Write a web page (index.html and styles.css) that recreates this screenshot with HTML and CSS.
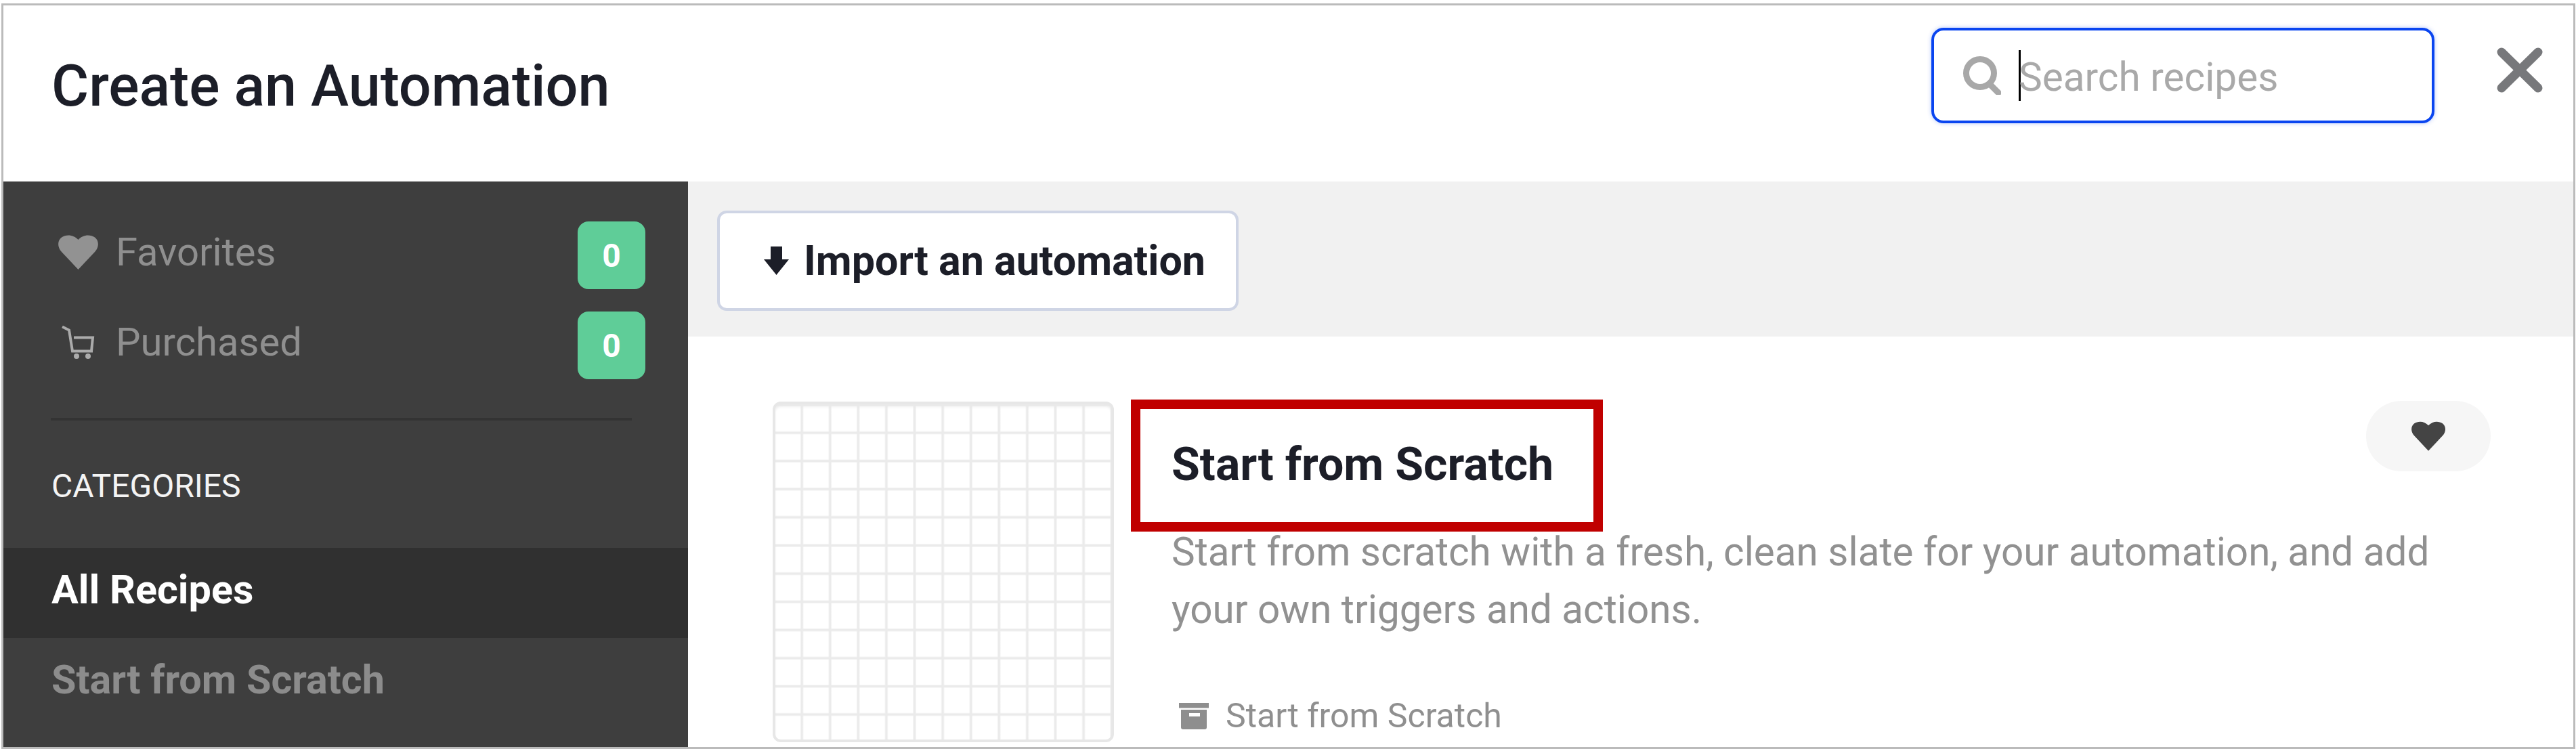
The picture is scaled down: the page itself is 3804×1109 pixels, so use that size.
FILE: index.html
```html
<!DOCTYPE html>
<html lang="en">
<head>
    <meta charset="UTF-8">
    <title>Create an Automation</title>
    <link rel="stylesheet" href="styles.css">
</head>
<body>
    <div class="frame">
        <header class="top-bar">
            <h1 class="top-title">Create an Automation</h1>
            <div class="search-box">
                <svg class="search-icon" viewBox="0 0 56 57" fill="none" stroke="#a8a8a8" stroke-width="9" stroke-linecap="round">
                    <circle cx="25" cy="25" r="20.500"/>
                    <path d="M39 41l13 13"/>
                </svg>
                <span class="caret"></span>
                <span class="search-text">Search recipes</span>
            </div>
            <svg class="close-icon" viewBox="0 0 68 67" fill="none" stroke="#77787b" stroke-width="13" stroke-linecap="round">
                <path d="M7 7l54 53M61 7L7 60"/>
            </svg>
        </header>
        <div class="body-row">
            <aside class="sidebar">
                <div class="side-top">
                    <div class="side-link">
                        <svg class="side-icon" viewBox="0 0 60 51" fill="#929292">
                            <path d="M29.5 51L5 25C-2 17-1 8 5 3.5 12-1.5 23-.5 29.5 7 36-.5 47-1.5 54 3.5 60 8 61 17 54 25z"/>
                        </svg>
                        <span class="side-link-text">Favorites</span>
                        <span class="badge">0</span>
                    </div>
                    <div class="side-link">
                        <svg class="side-icon" viewBox="0 0 60 51" fill="none" stroke="#ababab" stroke-width="4">
                            <path d="M6 2.5l10 5 5 31h30"/>
                            <path d="M23 18.500h28l-2 20"/>
                            <circle cx="27" cy="46" r="4" fill="#ababab" stroke="none"/>
                            <circle cx="44" cy="46" r="4" fill="#ababab" stroke="none"/>
                        </svg>
                        <span class="side-link-text">Purchased</span>
                        <span class="badge">0</span>
                    </div>
                </div>
                <div class="side-divider"></div>
                <div class="side-heading">CATEGORIES</div>
                <div class="side-item active"><span>All Recipes</span></div>
                <div class="side-item"><span>Start from Scratch</span></div>
            </aside>
            <main class="content">
                <div class="toolbar">
                    <button class="import-btn">
                        <svg class="import-icon" viewBox="0 0 37 42" fill="#1c1e28">
                            <path d="M10 0h17v19h10L18.500 42 0 19h10z"/>
                        </svg>
                        Import an automation
                    </button>
                </div>
                <div class="recipe">
                    <div class="thumb"></div>
                    <div class="recipe-info">
                        <div class="recipe-head">
                            <h2 class="recipe-title">Start from Scratch<span class="annotation"></span></h2>
                            <div class="fav-btn">
                                <svg class="fav-icon" viewBox="0 0 60 51" fill="#444">
                                    <path d="M29.5 51L5 25C-2 17-1 8 5 3.5 12-1.5 23-.5 29.5 7 36-.5 47-1.5 54 3.5 60 8 61 17 54 25z"/>
                                </svg>
                            </div>
                        </div>
                        <p class="recipe-desc">Start from scratch with a fresh, clean slate for your automation, and add your own triggers and actions.</p>
                        <div class="recipe-meta">
                            <svg class="meta-icon" viewBox="0 0 44 39" fill="#8e8e8e">
                                <rect width="44" height="7.500"/>
                                <path fill-rule="evenodd" d="M3 10h38v26a3 3 0 0 1-3 3H6a3 3 0 0 1-3-3zM15 15v5h16v-5z"/>
                            </svg>
                            Start from Scratch
                        </div>
                    </div>
                </div>
            </main>
        </div>
    </div>
</body>
</html>
```
FILE: styles.css
```css
html, body {
    margin: 0;
    height: 100%;
    background: #fff;
    overflow: hidden;
}
body {
    padding: 5px 1px 3px 2px;
    box-sizing: border-box;
    font-family: "Roboto", "Liberation Sans", sans-serif;
}
.frame {
    box-sizing: border-box;
    height: 100%;
    border: 3px solid #bbb;
    display: flex;
    flex-direction: column;
    overflow: hidden;
}

/* header */
.top-bar {
    flex: 0 0 260px;
    display: flex;
    align-items: flex-start;
    padding-left: 71px;
}
.top-title {
    margin: 70px auto 0 0;
    font-size: 84.5px;
    line-height: 100px;
    font-weight: 500;
    color: #1c1e28;
}
.search-box {
    box-sizing: border-box;
    width: 743px;
    height: 141px;
    margin-top: 33px;
    border: 4px solid #0a45f0;
    border-radius: 18px;
    box-shadow: 0 0 6px rgba(10, 69, 240, 0.3);
    display: flex;
    align-items: center;
    padding-left: 43px;
}
.search-icon {
    width: 56px;
    height: 57px;
}
.caret {
    width: 3px;
    height: 75px;
    background: #000;
    margin-left: 26px;
}
.search-text {
    font-size: 58.5px;
    color: #a9a9a9;
    margin: 4px 0 0 -3px;
}
.close-icon {
    width: 68px;
    height: 67px;
    margin: 62px 45px 0 92px;
}

/* sidebar */
.body-row {
    flex: 1;
    display: flex;
    min-height: 0;
}
.sidebar {
    flex: 0 0 1011px;
    background: #3e3e3e;
    padding-top: 59px;
    box-sizing: border-box;
}
.side-top {
    display: flex;
    flex-direction: column;
    gap: 33px;
    padding: 0 63px 0 81px;
}
.side-link {
    display: flex;
    align-items: center;
    height: 100px;
}
.side-icon {
    width: 60px;
    height: 51px;
    margin: 0 25px 10px 0;
}
.side-link-text {
    font-size: 58px;
    color: #8f8f8f;
    margin: 0 auto 10px 0;
}
.badge {
    width: 100px;
    height: 100px;
    border-radius: 16px;
    background: #5fcd98;
    color: #fff;
    font-size: 48px;
    font-weight: 700;
    display: flex;
    align-items: center;
    justify-content: center;
}
.side-divider {
    height: 4px;
    background: #333;
    margin: 57px 83px 0 70px;
}
.side-heading {
    margin: 73px 0 67px 71px;
    font-size: 48px;
    line-height: 48px;
    color: #f4f4f4;
}
.side-item {
    height: 133px;
    display: flex;
    align-items: center;
    padding-left: 71px;
    font-size: 59.3px;
    font-weight: 700;
    color: #8c8c8c;
}
.side-item span {
    margin-bottom: 10px;
}
.side-item.active {
    background: #303030;
    color: #fff;
}

/* main area */
.content {
    flex: 1;
    min-width: 0;
}
.toolbar {
    height: 229px;
    box-sizing: border-box;
    padding: 43px 0 0 43px;
    background: #f1f1f1;
}
.import-btn {
    box-sizing: border-box;
    width: 770px;
    height: 148px;
    background: #fff;
    border: 4px solid #cfd5e5;
    border-radius: 14px;
    display: flex;
    align-items: center;
    padding: 0 0 0 65px;
    font-family: inherit;
    font-size: 61px;
    font-weight: 700;
    color: #1c1e28;
}
.import-icon {
    width: 37px;
    height: 42px;
    margin-right: 22px;
}
.recipe {
    display: flex;
    padding: 96px 122px 0 125px;
}
.thumb {
    flex: 0 0 504px;
    height: 503px;
    box-sizing: border-box;
    border: 4px solid #e7e7e7;
    border-radius: 12px;
    box-shadow: inset 0 5px 4px -2px #e8e8e8;
    background-image:
        linear-gradient(to right, transparent 36.5px, #ebebeb 38px, #ebebeb 40.5px, transparent 41.600px),
        linear-gradient(to bottom, transparent 36.5px, #ebebeb 38px, #ebebeb 40.5px, transparent 41.600px);
    background-size: 41.6px 41.6px;
    background-position: 0 3px;
}
.recipe-info {
    flex: 1;
    margin-left: 85px;
}
.recipe-head {
    display: flex;
    justify-content: space-between;
    align-items: flex-start;
    margin-top: -1px;
}
.recipe-title {
    position: relative;
    margin: 54px 0 0;
    font-size: 68px;
    line-height: 80px;
    font-weight: 700;
    color: #1c1e28;
}
.annotation {
    position: absolute;
    left: -60px;
    top: -56px;
    width: 697px;
    height: 195px;
    box-sizing: border-box;
    border: 14px solid #c00000;
}
.fav-btn {
    width: 184px;
    height: 104px;
    border-radius: 52px;
    background: #f6f6f6;
    display: flex;
    align-items: center;
    justify-content: center;
}
.fav-icon {
    width: 51px;
    height: 44px;
}
.recipe-desc {
    margin: 47px 0 0;
    max-width: 1880px;
    font-size: 58.4px;
    line-height: 85px;
    color: #919191;
}
.recipe-meta {
    display: flex;
    align-items: center;
    margin-top: 84px;
    padding-left: 11px;
    height: 60px;
    font-size: 50px;
    color: #8f8f8f;
}
.meta-icon {
    width: 44px;
    height: 39px;
    margin-right: 25px;
}
```
